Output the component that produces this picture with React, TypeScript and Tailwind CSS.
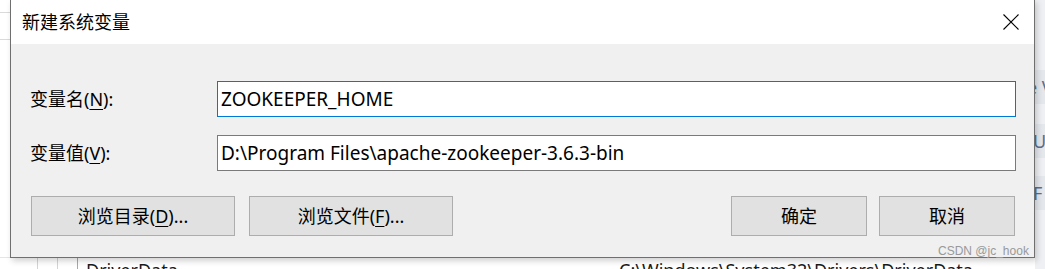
import React from 'react';

const uiFont = '"Segoe UI", "Noto Sans", "Noto Sans CJK SC", sans-serif';

const Key: React.FC<{ k: string }> = ({ k }) => <span className="underline underline-offset-[3px]">{k}</span>;

const DialogButton: React.FC<{ width: string; children: React.ReactNode }> = ({ width, children }) => (
  <button className={`${width} h-[40px] bg-[#e1e1e1] border border-[#adadad] text-[18px] text-black flex items-center justify-center`}>
    {children}
  </button>
);

const Field: React.FC<{ label: React.ReactNode; value: string; focused?: boolean }> = ({ label, value, focused }) => (
  <div className="flex items-center">
    <div className="w-[187px] text-[18px] text-black leading-none">{label}</div>
    <div
      className={`flex-1 h-[36px] bg-white border flex items-center pl-[3px] text-[19px] text-black ${
        focused ? 'border-[#0078d7]' : 'border-[#7a7a7a]'
      }`}
    >
      {value}
    </div>
  </div>
);

const BackWindow: React.FC = () => (
  <div className="absolute inset-0 flex">
    <div className="flex-1 flex flex-col bg-white">
      <div className="h-[13px] border-b border-[#dadada]" />
      <div className="h-[27px] border-b border-[#dadada]" />
      <div className="flex-1" />
      <div className="h-[12px] flex overflow-hidden border-t border-[#e5e5e5]">
        <div className="w-[38px] border-r border-[#d4d4d4]" />
        <div className="w-[20px] border-r border-[#d4d4d4]" />
        <div className="w-[20px] border-r border-[#a8a8a8]" />
        <div className="flex-1 pl-[8px] pt-[1px] text-[18px] leading-[22px] text-[#1a1a1a] flex" style={{ fontFamily: uiFont }}>
          <span className="w-[533px]">DriverData</span>
          <span>C:\Windows\System32\Drivers\DriverData</span>
        </div>
      </div>
    </div>
    <div className="w-[10px] flex flex-col bg-[#eef0f3] text-[18px] text-[#5d6d8e] overflow-hidden" style={{ fontFamily: uiFont }}>
      <div className="h-[70px]" />
      <div className="h-[34px] bg-[#e4e7ec] leading-[34px] whitespace-nowrap -ml-[8px]">e V</div>
      <div className="h-[20px]" />
      <div className="h-[34px] bg-[#e4e7ec] leading-[34px] whitespace-nowrap -ml-[2px]">U</div>
      <div className="h-[18px]" />
      <div className="h-[34px] bg-[#e4e7ec] leading-[34px] whitespace-nowrap -ml-[2px]">F</div>
    </div>
  </div>
);

export default function App() {
  return (
    <div className="relative w-[1045px] h-[269px] overflow-hidden bg-white" style={{ fontFamily: uiFont }}>
      <BackWindow />

      <div className="absolute left-[10px] top-[-1px] w-[1025px] h-[259px] border border-[#6f6f6f] bg-[#f0f0f0] flex flex-col shadow-[2px_3px_6px_rgba(0,0,0,0.18)]">
        <div className="h-[44px] shrink-0 bg-white flex items-center justify-between pl-[11px] pr-[15px]">
          <span className="text-[18px] text-black leading-none">新建系统变量</span>
          <svg width="16" height="16" viewBox="0 0 16 16" className="block">
            <path d="M0.5 0.5 L15.5 15.5 M15.5 0.5 L0.5 15.5" stroke="#000" strokeWidth="1.1" fill="none" />
          </svg>
        </div>

        <div className="flex flex-col pt-[37px] pl-[19px] pr-[18px]">
          <Field
            focused
            value="ZOOKEEPER_HOME"
            label={
              <>
                变量名(<Key k="N" />):
              </>
            }
          />
          <div className="h-[18px]" />
          <Field
            value="D:\Program Files\apache-zookeeper-3.6.3-bin"
            label={
              <>
                变量值(<Key k="V" />):
              </>
            }
          />
        </div>

        <div className="flex justify-between mt-[25px] pl-[20px] pr-[19px]">
          <div className="flex gap-[14px]">
            <DialogButton width="w-[204px]">
              浏览目录(<Key k="D" />)...
            </DialogButton>
            <DialogButton width="w-[204px]">
              浏览文件(<Key k="F" />)...
            </DialogButton>
          </div>
          <div className="flex gap-[12px]">
            <DialogButton width="w-[136px]">确定</DialogButton>
            <DialogButton width="w-[136px]">取消</DialogButton>
          </div>
        </div>
      </div>

      <div
        className="absolute left-[938px] top-[243px] text-[12px] leading-[17px] text-[#999999]"
        style={{ fontFamily: '"Liberation Sans", Arial, sans-serif' }}
      >
        CSDN @jc_hook
      </div>
    </div>
  );
}
